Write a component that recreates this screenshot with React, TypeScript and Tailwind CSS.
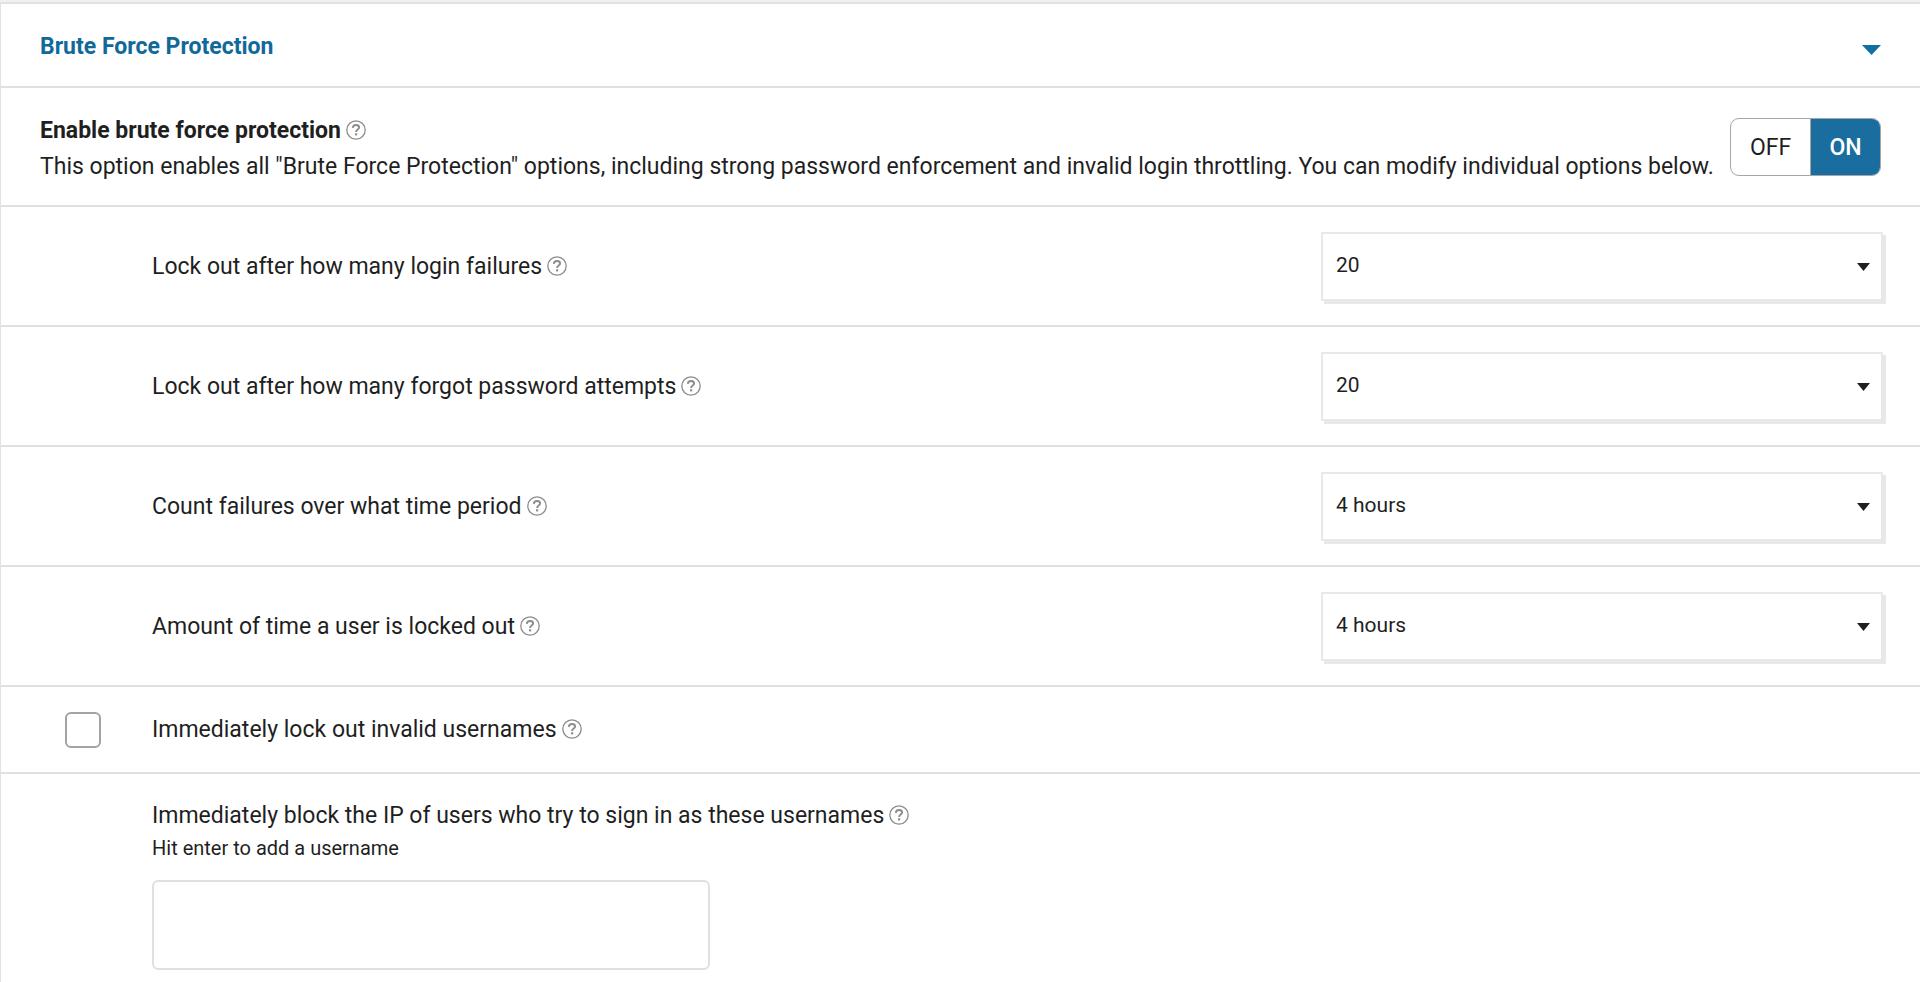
import { useState } from "react"

const lockoutOptions = [
  { id: "failures", label: "Lock out after how many login failures", value: "20", options: ["5", "10", "20", "50"] },
  { id: "forgot", label: "Lock out after how many forgot password attempts", value: "20", options: ["5", "10", "20", "50"] },
  { id: "period", label: "Count failures over what time period", value: "4 hours", options: ["1 hour", "4 hours", "1 day"] },
  { id: "duration", label: "Amount of time a user is locked out", value: "4 hours", options: ["1 hour", "4 hours", "1 day"] },
]

function HelpLink() {
  return (
    <a href="#help" aria-label="Help" className="mb-0.5 ml-[5px] shrink-0 text-[#8c8c8c]">
      <svg width="20" height="20" viewBox="0 0 20 20" fill="none" stroke="currentColor">
        <circle cx="10" cy="10" r="9.2" strokeWidth="1.3" />
        <path d="M6.8 7.9C6.9 6 8.1 5 10 5c1.9 0 3.1 1 3.1 2.5 0 2.1-3 2.1-3 4.5" strokeWidth="1.9" />
        <path d="M10.1 13.3v2.1" strokeWidth="2.2" />
      </svg>
    </a>
  )
}

function Select({ id, value, options }: { id: string; value: string; options: string[] }) {
  return (
    <div className="relative mr-[37px] w-[562px] shrink-0">
      <select
        id={id}
        defaultValue={value}
        className="block h-[69px] w-full appearance-none border-2 border-[#e8e8e8] bg-white pb-0.5 pl-[13px] pr-12 text-[21px] shadow-[3px_3px_0_#e8e8e8]"
      >
        {options.map(option => (
          <option key={option}>{option}</option>
        ))}
      </select>
      <svg className="pointer-events-none absolute right-[13px] top-[31px]" width="13" height="8" viewBox="0 0 13 8">
        <path d="M0 0h13L6.5 8z" fill="#1f1f1f" />
      </svg>
    </div>
  )
}

export default function App() {
  const [enabled, setEnabled] = useState(true)

  return (
    <div className="min-h-screen border-t-2 border-[#f0f0f0] bg-white font-[Roboto,sans-serif] text-[23px] leading-9 text-[#1f1f1f]">
      <section className="min-h-[980px] border-l border-t-2 border-[#e2e2e2]">
        <header className="flex h-[84px] items-center justify-between border-b-2 border-[#e0e0e0] pl-[39px] pr-[39px] pt-1">
          <h2 className="font-bold text-[#11699a]">Brute Force Protection</h2>
          <button aria-label="Collapse section" className="pt-1.5">
            <svg width="19" height="10" viewBox="0 0 19 10">
              <path d="M0 0h19L9.5 10z" fill="#0f70a1" />
            </svg>
          </button>
        </header>

        <div className="flex h-[119px] items-center justify-between border-b-2 border-[#e0e0e0] pl-[39px] pr-[39px]">
          <div className="pt-1">
            <div className="flex items-center">
              <h3 className="font-bold">Enable brute force protection</h3>
              <HelpLink />
            </div>
            <p>
              This option enables all "Brute Force Protection" options, including strong password enforcement and
              invalid login throttling. You can modify individual options below.
            </p>
          </div>
          <div className="flex h-[58px] w-[151px] shrink-0 overflow-hidden rounded-[9px] border border-[#a6a6a6]">
            <button
              onClick={() => setEnabled(false)}
              aria-pressed={!enabled}
              className="w-20 border-r border-[#a6a6a6] pt-0.5"
            >
              OFF
            </button>
            <button
              onClick={() => setEnabled(true)}
              aria-pressed={enabled}
              className="flex-1 bg-[#1a6e9f] pt-0.5 font-medium text-white"
            >
              ON
            </button>
          </div>
        </div>

        {lockoutOptions.map(option => (
          <div key={option.id} className="flex h-[120px] items-center justify-between border-b-2 border-[#e0e0e0] pl-[151px]">
            <div className="flex items-center pt-0.5">
              <label htmlFor={option.id}>{option.label}</label>
              <HelpLink />
            </div>
            <Select id={option.id} value={option.value} options={option.options} />
          </div>
        ))}

        <div className="flex h-[87px] items-center border-b-2 border-[#e0e0e0] pl-16">
          <input
            id="invalid"
            type="checkbox"
            className="mr-[51px] size-9 appearance-none rounded-md border-2 border-[#a3a3a3] bg-white checked:bg-[#1a6e9f]"
          />
          <label htmlFor="invalid">Immediately lock out invalid usernames</label>
          <HelpLink />
        </div>

        <div className="pl-[151px] pt-6">
          <div className="flex items-center">
            <label htmlFor="usernames">Immediately block the IP of users who try to sign in as these usernames</label>
            <HelpLink />
          </div>
          <p className="text-[20px] leading-7">Hit enter to add a username</p>
          <textarea
            id="usernames"
            className="mt-[18px] block h-[90px] w-[558px] resize-none rounded-md border-2 border-[#e0e0e0] px-3 py-2"
          />
        </div>
      </section>
    </div>
  )
}
